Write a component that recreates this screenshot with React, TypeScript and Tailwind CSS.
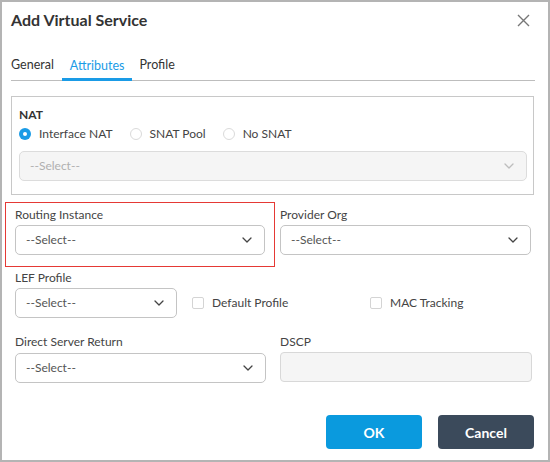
import React from "react";

function Chevron({ light = false }: { light?: boolean }) {
  return (
    <svg width="10" height="6" viewBox="0 0 10 6" fill="none" className="shrink-0">
      <path
        d="M1 1l4 4 4-4"
        stroke={light ? "#bdbdbd" : "#444"}
        strokeWidth="1.3"
        strokeLinecap="round"
        strokeLinejoin="round"
      />
    </svg>
  );
}

function Select({ className = "", disabled = false }: { className?: string; disabled?: boolean }) {
  return (
    <div
      className={`h-[30px] rounded-[5px] border flex items-center justify-between pl-[10px] pr-[12px] text-[12px] ${
        disabled
          ? "bg-[#f5f5f5] border-[#dcdcdc] text-[#b0b0b0]"
          : "bg-white border-[#c4c4c4] text-[#555]"
      } ${className}`}
    >
      <span>--Select--</span>
      <Chevron light={disabled} />
    </div>
  );
}

function Label({ children }: { children: React.ReactNode }) {
  return <div className="text-[12px] leading-[14px] text-[#444]">{children}</div>;
}

function Radio({ label, checked = false }: { label: string; checked?: boolean }) {
  return (
    <div className="flex items-center gap-[8px]">
      {checked ? (
        <span className="w-[12px] h-[12px] rounded-full bg-[#1a9be6] flex items-center justify-center">
          <span className="w-[4px] h-[4px] rounded-full bg-white" />
        </span>
      ) : (
        <span className="w-[12px] h-[12px] rounded-full border border-[#dadada]" />
      )}
      <span className="text-[12px] text-[#444]">{label}</span>
    </div>
  );
}

function Checkbox({ label }: { label: string }) {
  return (
    <div className="flex items-center gap-[8px]">
      <span className="w-[12px] h-[12px] rounded-[2px] border border-[#d4d4d4]" />
      <span className="text-[12px] text-[#444]">{label}</span>
    </div>
  );
}

export default function App() {
  return (
    <div className="w-[550px] h-[462px] border-2 border-[#b4b4b4] bg-white flex flex-col font-['Lato',sans-serif] text-[#333]">
      {/* Header */}
      <div className="h-[36px] flex items-center justify-between pl-[9px] pr-[18px]">
        <div className="text-[16px] font-bold text-[#333]">Add Virtual Service</div>
        <svg width="13" height="13" viewBox="0 0 13 13" fill="none">
          <path d="M1 1l11 11M12 1L1 12" stroke="#777" strokeWidth="1.4" />
        </svg>
      </div>

      {/* Tabs */}
      <div className="ml-[9px] mr-[13px] h-[43px] flex items-end border-b border-[#bdbdbd]">
        <div className="pr-[8px] pb-[7px] text-[12.5px] leading-[16px] text-[#333]">General</div>
        <div className="px-[8px] pb-[4px] text-[12.5px] leading-[16px] text-[#1a9be6] border-b-[3px] border-[#1a9be6] -mb-px">
          Attributes
        </div>
        <div className="px-[7px] pb-[7px] text-[12.5px] leading-[16px] text-[#333]">Profile</div>
      </div>

      {/* NAT box */}
      <div className="mt-[15px] ml-[9px] mr-[14px] border border-[#c8c8c8] pl-[7px] pr-[6px] pt-[11px] pb-[13px]">
        <div className="text-[12px] leading-[14px] font-bold text-[#333]">NAT</div>
        <div className="flex items-center gap-[17px] mt-[3px] h-[18px]">
          <Radio label="Interface NAT" checked />
          <Radio label="SNAT Pool" />
          <Radio label="No SNAT" />
        </div>
        <Select disabled className="mt-[8px]" />
      </div>

      {/* Routing / Provider */}
      <div className="mt-[7px] ml-[3px] flex">
        <div className="w-[270px] border border-[#e53935] pl-[9px] pr-[9px] pt-[5px] pb-[11px]">
          <Label>Routing Instance</Label>
          <Select className="mt-[3px]" />
        </div>
        <div className="ml-[5px] w-[251px] pt-[6px]">
          <Label>Provider Org</Label>
          <Select className="mt-[3px]" />
        </div>
      </div>

      {/* LEF Profile row */}
      <div className="mt-[4px] ml-[13px] flex items-end">
        <div className="w-[162px]">
          <Label>LEF Profile</Label>
          <Select className="mt-[3px]" />
        </div>
        <div className="ml-[15px] h-[30px] flex items-center w-[178px]">
          <Checkbox label="Default Profile" />
        </div>
        <div className="h-[30px] flex items-center">
          <Checkbox label="MAC Tracking" />
        </div>
      </div>

      {/* DSR / DSCP */}
      <div className="mt-[17px] ml-[13px] flex gap-[14px]">
        <div className="w-[251px]">
          <Label>Direct Server Return</Label>
          <Select className="mt-[4px]" />
        </div>
        <div className="w-[252px]">
          <Label>DSCP</Label>
          <div className="mt-[3px] h-[30px] rounded-[4px] border border-[#d8d8d8] bg-[#f5f5f5]" />
        </div>
      </div>

      {/* Buttons */}
      <div className="mt-auto pb-[11px] pr-[14px] flex justify-end gap-[16px]">
        <button className="w-[96px] h-[34px] rounded-[4px] bg-[#0a9ade] text-white text-[14px] font-bold">
          OK
        </button>
        <button className="w-[96px] h-[34px] rounded-[4px] bg-[#3b4a5b] text-white text-[14px] font-bold">
          Cancel
        </button>
      </div>
    </div>
  );
}
